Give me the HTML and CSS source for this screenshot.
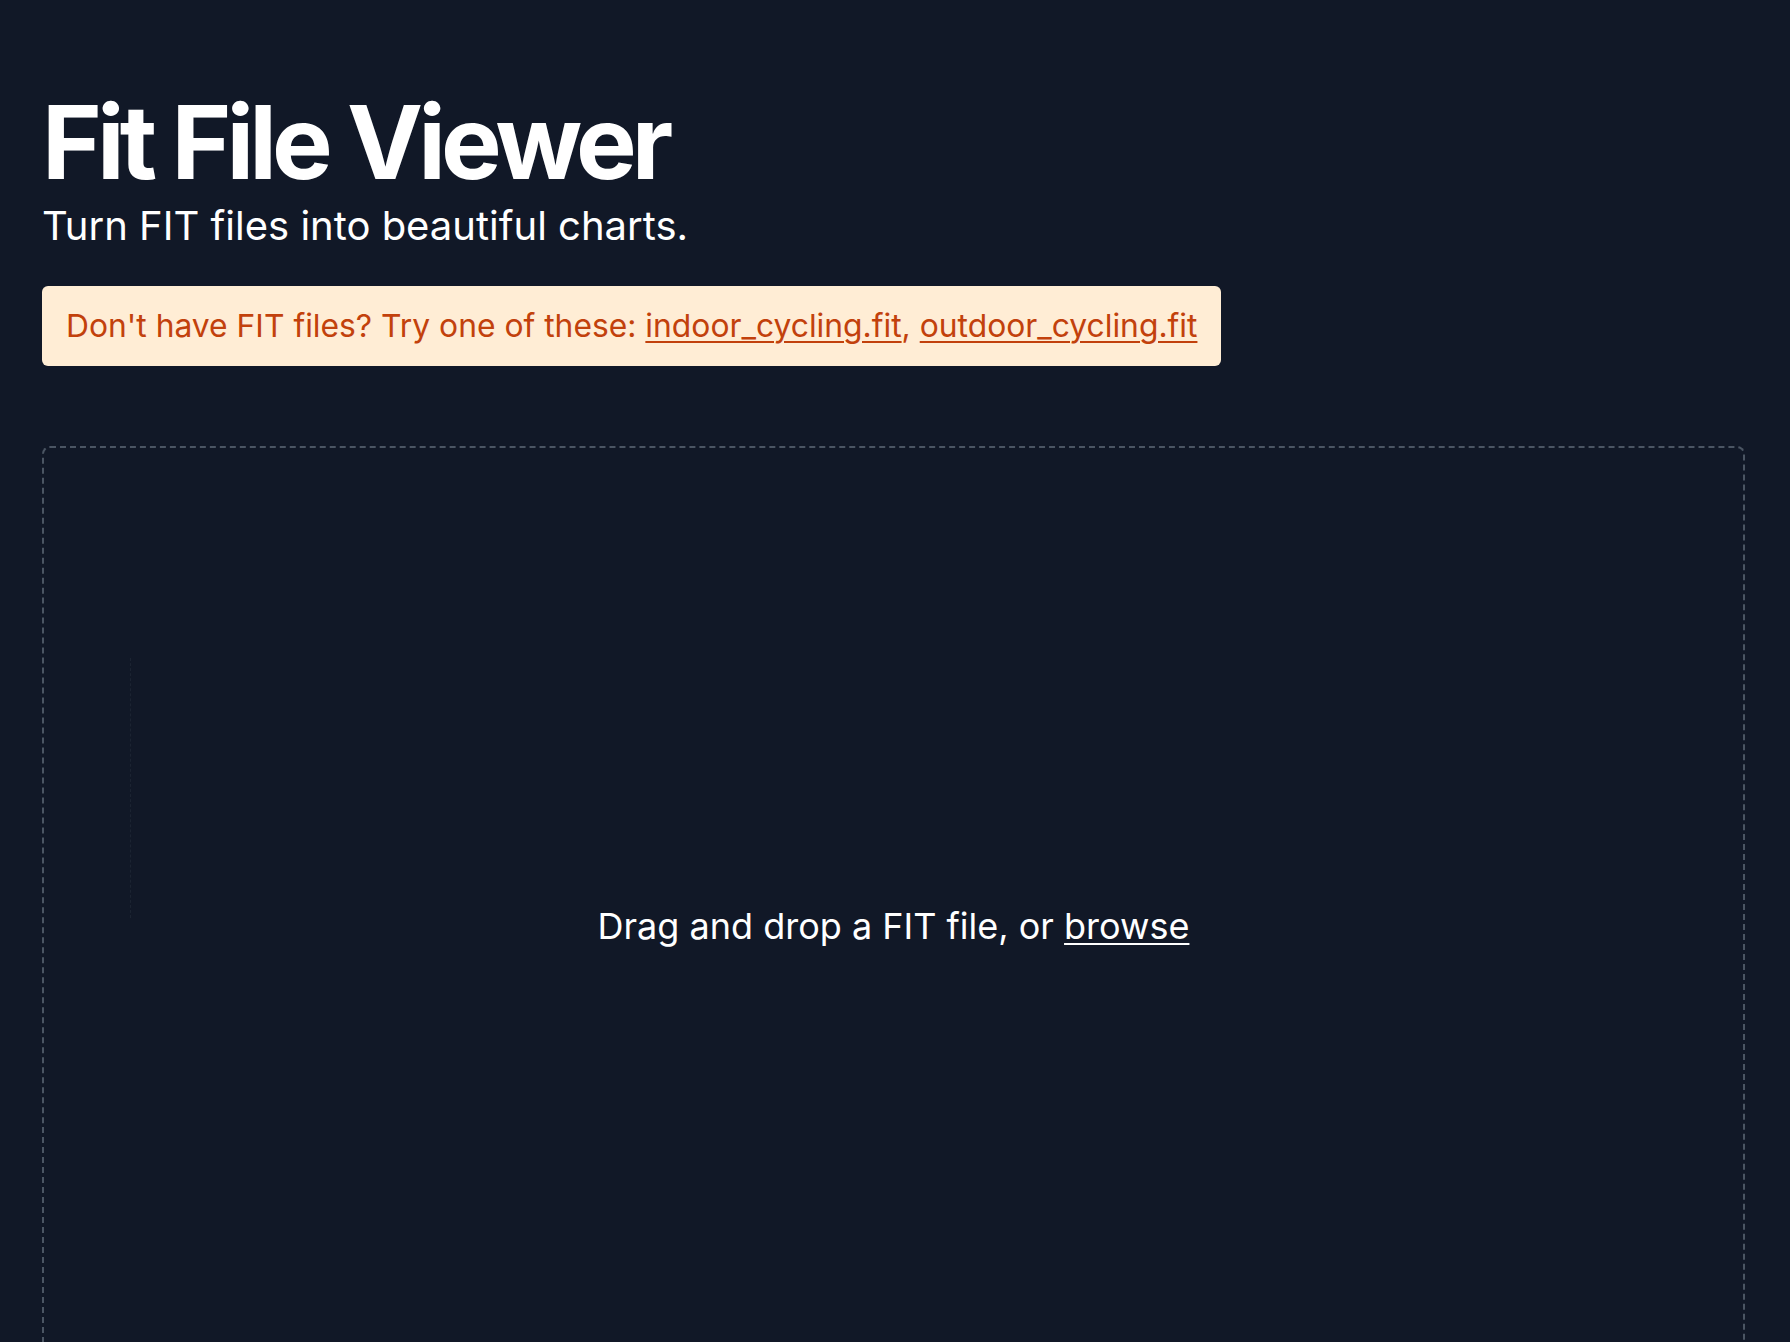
FILE: index.html
```html
<!DOCTYPE html>
<html lang="en">
<head>
<meta charset="utf-8">
<title>Fit File Viewer</title>
<link rel="stylesheet" href="styles.css">
</head>
<body>
<main class="page">
  <header class="intro">
    <h1 class="title">Fit File Viewer</h1>
    <p class="subtitle">Turn FIT files into beautiful charts.</p>
  </header>
  <div class="notice">
    Don't have FIT files? Try one of these: <a href="#" class="notice-link">indoor_cycling.fit</a>, <a href="#" class="notice-link">outdoor_cycling.fit</a>
  </div>
  <section class="dropzone">
    <span class="ghost-axis"></span>
    <p class="drop-text">Drag and drop a FIT file, or <a href="#" class="browse">browse</a></p>
  </section>
</main>
</body>
</html>
```
FILE: styles.css
```css
html, body {
  margin: 0;
  padding: 0;
  background: #111827;
}
body {
  font-family: Inter, "Noto Sans", "Liberation Sans", sans-serif;
  color: #ffffff;
}
.page {
  padding: 91px 45px 0 42px;
  display: flex;
  flex-direction: column;
}
.intro {
  display: flex;
  flex-direction: column;
}
.title {
  margin: 0;
  font-size: 102px;
  font-weight: 700;
  line-height: 1;
  letter-spacing: -0.048em;
}
.subtitle {
  margin: 9px 0 0;
  font-size: 40px;
  line-height: 48px;
  font-weight: 400;
}
.notice {
  margin-top: 36px;
  align-self: flex-start;
  background: #ffedd5;
  color: #c2410c;
  border-radius: 6px;
  padding: 20px 24px;
  font-size: 31.8px;
  line-height: 40px;
}
.notice-link {
  color: #c2410c;
  text-decoration: underline;
  text-underline-offset: 4px;
  text-decoration-thickness: 2px;
}
.dropzone {
  position: relative;
  margin-top: 80px;
  height: 956px;
  border: 2px dashed #4b5563;
  border-radius: 8px;
  display: flex;
  align-items: center;
  justify-content: center;
}
.drop-text {
  margin: 0;
  font-size: 36px;
  line-height: 44px;
}
.browse {
  color: #ffffff;
  text-decoration: underline;
  text-underline-offset: 4px;
  text-decoration-thickness: 2px;
}
.ghost-axis {
  position: absolute;
  left: 86px;
  top: 210px;
  height: 260px;
  border-left: 1px dashed #1c2432;
}
```
